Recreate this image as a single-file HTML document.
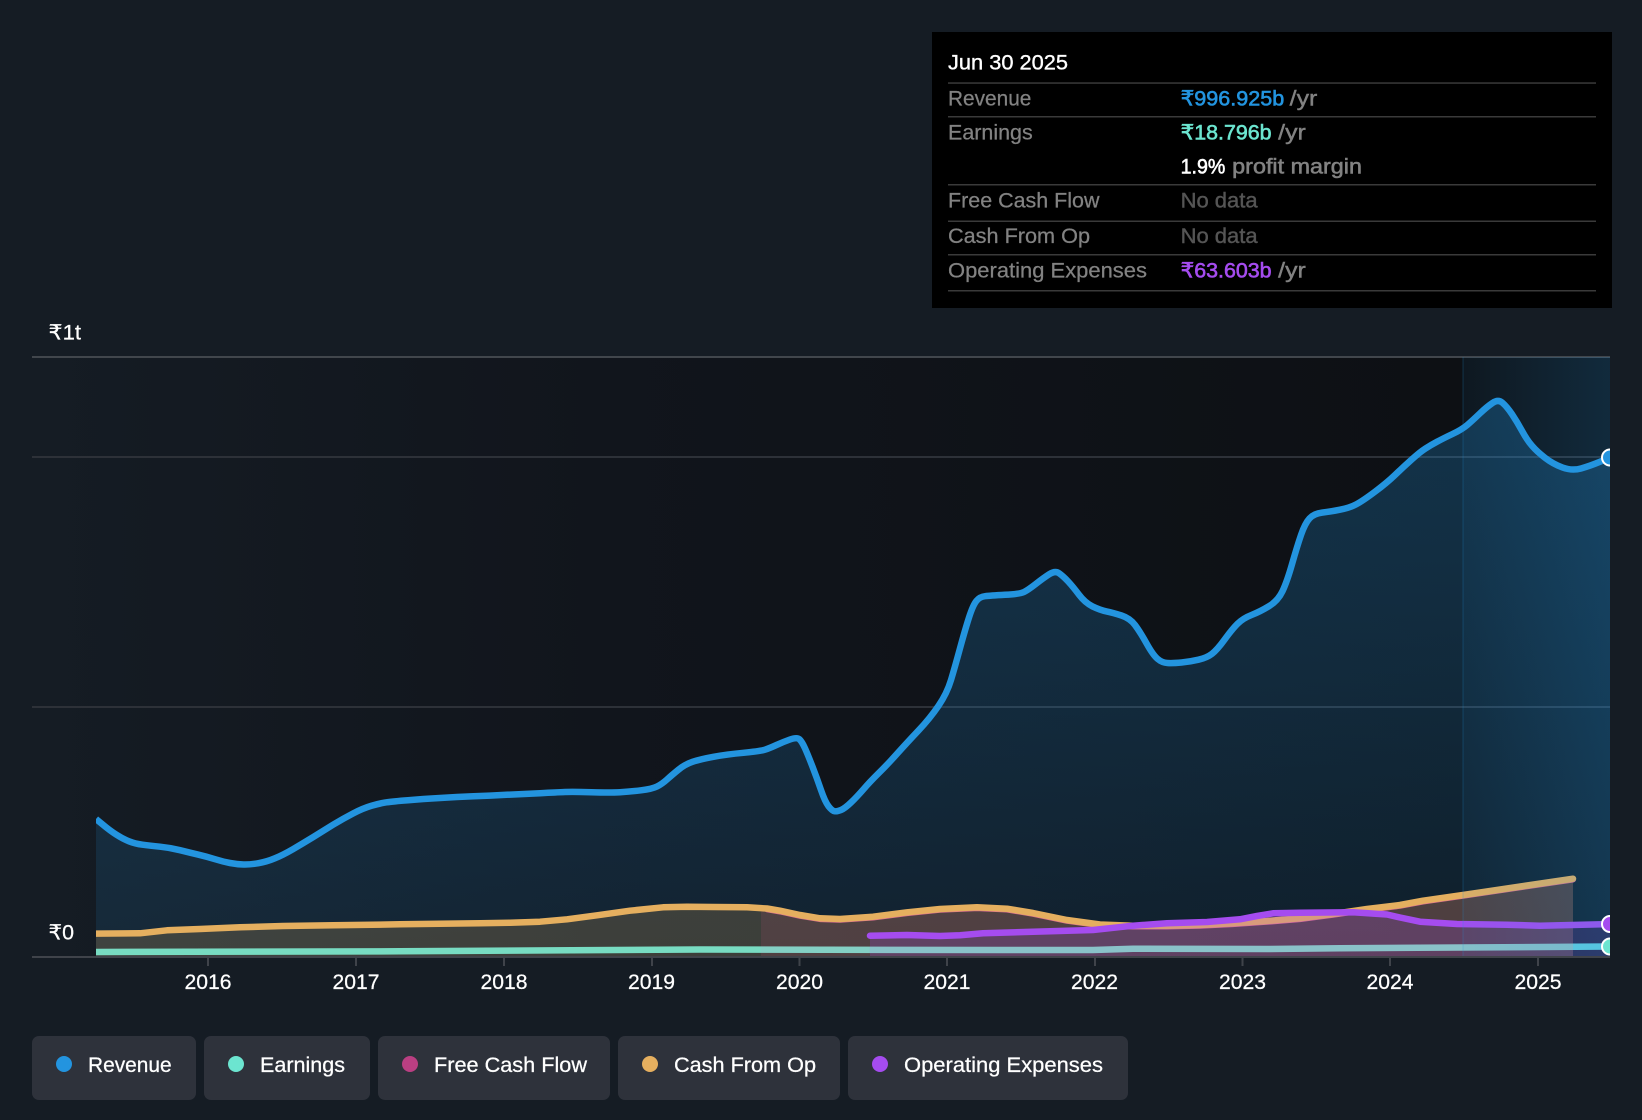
<!DOCTYPE html>
<html>
<head>
<meta charset="utf-8">
<title>Chart</title>
<style>
html,body{margin:0;padding:0;background:#151c24;width:1642px;height:1120px;overflow:hidden}
svg{display:block}
text{font-family:"Liberation Sans","DejaVu Sans",sans-serif;font-size:21px}
.g{fill:#828282;stroke:#828282;stroke-width:.25px}
.n{fill:#555555;stroke:#555555;stroke-width:.25px}
.m{stroke-width:.6px}
.w{fill:#fff;stroke:#fff;stroke-width:.25px}
</style>
</head>
<body>
<svg width="1642" height="1120" viewBox="0 0 1642 1120" xmlns="http://www.w3.org/2000/svg">
<defs>
<linearGradient id="bg" gradientUnits="userSpaceOnUse" x1="32" y1="0" x2="1610" y2="0">
<stop offset="0" stop-color="#151c24"/><stop offset=".36" stop-color="#11151c"/><stop offset=".9" stop-color="#0d1014"/><stop offset="1" stop-color="#0d1014"/>
</linearGradient>
<linearGradient id="rev" gradientUnits="userSpaceOnUse" x1="0" y1="400" x2="0" y2="957">
<stop offset="0" stop-color="#2394df" stop-opacity=".27"/><stop offset="1" stop-color="#2394df" stop-opacity=".11"/>
</linearGradient>
<linearGradient id="band" gradientUnits="userSpaceOnUse" x1="1463" y1="0" x2="1610" y2="0">
<stop offset="0" stop-color="#2394df" stop-opacity=".06"/><stop offset="1" stop-color="#2394df" stop-opacity=".2"/>
</linearGradient>
<linearGradient id="earn" gradientUnits="userSpaceOnUse" x1="96" y1="0" x2="1610" y2="0">
<stop offset="0" stop-color="#78dcc2"/><stop offset=".439" stop-color="#78dcc2"/><stop offset=".439" stop-color="#84d0c4"/><stop offset=".511" stop-color="#84d0c4"/><stop offset=".511" stop-color="#8ac2c9"/><stop offset=".9756" stop-color="#8ac2c9"/><stop offset=".9756" stop-color="#62cfe0"/><stop offset="1" stop-color="#62cfe0"/>
</linearGradient>
<clipPath id="c"><rect x="96" y="340" width="1514" height="617"/></clipPath>
<clipPath id="m"><rect x="1590" y="340" width="20" height="617"/></clipPath>
</defs>

<rect width="1642" height="1120" fill="#151c24"/>
<rect x="32" y="357" width="1578" height="600" fill="url(#bg)"/>

<!-- grid -->
<rect x="32" y="356" width="1578" height="2" fill="#41464c"/>
<rect x="32" y="456" width="1578" height="2" fill="#2d3138"/>
<rect x="32" y="706" width="1578" height="2" fill="#2d3138"/>

<g clip-path="url(#c)">
<!-- revenue fill -->
<path fill="url(#rev)" d="M96 819L103 824.8Q110 830.7 116.5 834.8Q123 839 129 841.3Q135 843.7 142.5 844.7Q150 845.7 160 846.7Q170 847.7 180 850.2Q190 852.7 198.5 854.7Q207 856.7 215 859.2Q223 861.7 230 863Q237 864.3 243.5 864.5Q250 864.7 258.5 863.2Q267 861.7 275 858.3Q283 855 293 849.2Q303 843.3 313 837.2Q323 831 333 824.8Q343 818.7 353 813.5Q363 808.3 371.5 805.8Q380 803.3 386.5 802.3Q393 801.3 408 800.2Q423 799 440 798Q457 797 473.5 796.3Q490 795.7 506.5 794.8Q523 794 540 793.2Q557 792.3 565 792Q573 791.7 591.5 792.2Q610 792.7 620 792.2Q630 791.7 641 790.3Q652 789 657 786.5Q662 784 667 779.5Q672 775 678.5 769.7Q685 764.3 692.5 761.8Q700 759.3 713.5 756.8Q727 754.3 743.5 752.8Q760 751.3 765 749.7Q770 748 776.5 745Q783 742 790 739.5Q797 737 799.5 739.3Q802 741.7 805 748.3Q808 755 812.5 766.7Q817 778.3 821 790Q825 801.7 828.5 806.2Q832 810.7 834.5 811.2Q837 811.7 841 810Q845 808.3 851 802.5Q857 796.7 863.5 789.2Q870 781.7 878.5 773.3Q887 765 897 753.8Q907 742.7 918.5 730.5Q930 718.3 938.5 705.8Q947 693.3 951 680Q955 666.7 960 648.3Q965 630 969 617.5Q973 605 976.5 600.8Q980 596.7 985 596.2Q990 595.7 1005 594.8Q1020 594 1024 592Q1028 590 1035.5 584.2Q1043 578.3 1049 574.4Q1055 570.5 1059 573.2Q1063 576 1068 581.3Q1073 586.7 1079 594.7Q1085 602.7 1092.5 606.4Q1100 610 1106.5 611.4Q1113 612.7 1121.5 615.5Q1130 618.3 1135 625Q1140 631.7 1146.5 643.3Q1153 655 1157.5 658.8Q1162 662.7 1167.5 663Q1173 663.3 1181.5 662.5Q1190 661.7 1198.5 659.7Q1207 657.7 1212 653.8Q1217 650 1224.5 639.7Q1232 629.3 1237.5 623.8Q1243 618.3 1251.5 615Q1260 611.7 1269 606.2Q1278 600.7 1282.5 591.2Q1287 581.7 1292 564.2Q1297 546.7 1301 535Q1305 523.3 1309.5 518.4Q1314 513.5 1322 512.6Q1330 511.7 1340 509.7Q1350 507.7 1356.5 504.2Q1363 500.7 1375 491.7Q1387 482.7 1395 475Q1403 467.3 1411.5 459.7Q1420 452 1425.5 448.5Q1431 445 1437 441.8Q1443 438.5 1452.5 434Q1462 429.5 1467.5 424.8Q1473 420 1480 413.3Q1487 406.7 1492.5 403Q1498 399 1502.5 402.8Q1507 406.7 1512 414.2Q1517 421.7 1522 430.8Q1527 440 1532 445.8Q1537 451.7 1545 457.8Q1553 464 1562.5 467.5Q1572 471 1581 468.5Q1590 466 1600 461.8L1610 457.5L1610 957L96 957Z"/>
<!-- revenue line -->
<path fill="none" stroke="#2394df" stroke-width="6.5" d="M96 819L103 824.8Q110 830.7 116.5 834.8Q123 839 129 841.3Q135 843.7 142.5 844.7Q150 845.7 160 846.7Q170 847.7 180 850.2Q190 852.7 198.5 854.7Q207 856.7 215 859.2Q223 861.7 230 863Q237 864.3 243.5 864.5Q250 864.7 258.5 863.2Q267 861.7 275 858.3Q283 855 293 849.2Q303 843.3 313 837.2Q323 831 333 824.8Q343 818.7 353 813.5Q363 808.3 371.5 805.8Q380 803.3 386.5 802.3Q393 801.3 408 800.2Q423 799 440 798Q457 797 473.5 796.3Q490 795.7 506.5 794.8Q523 794 540 793.2Q557 792.3 565 792Q573 791.7 591.5 792.2Q610 792.7 620 792.2Q630 791.7 641 790.3Q652 789 657 786.5Q662 784 667 779.5Q672 775 678.5 769.7Q685 764.3 692.5 761.8Q700 759.3 713.5 756.8Q727 754.3 743.5 752.8Q760 751.3 765 749.7Q770 748 776.5 745Q783 742 790 739.5Q797 737 799.5 739.3Q802 741.7 805 748.3Q808 755 812.5 766.7Q817 778.3 821 790Q825 801.7 828.5 806.2Q832 810.7 834.5 811.2Q837 811.7 841 810Q845 808.3 851 802.5Q857 796.7 863.5 789.2Q870 781.7 878.5 773.3Q887 765 897 753.8Q907 742.7 918.5 730.5Q930 718.3 938.5 705.8Q947 693.3 951 680Q955 666.7 960 648.3Q965 630 969 617.5Q973 605 976.5 600.8Q980 596.7 985 596.2Q990 595.7 1005 594.8Q1020 594 1024 592Q1028 590 1035.5 584.2Q1043 578.3 1049 574.4Q1055 570.5 1059 573.2Q1063 576 1068 581.3Q1073 586.7 1079 594.7Q1085 602.7 1092.5 606.4Q1100 610 1106.5 611.4Q1113 612.7 1121.5 615.5Q1130 618.3 1135 625Q1140 631.7 1146.5 643.3Q1153 655 1157.5 658.8Q1162 662.7 1167.5 663Q1173 663.3 1181.5 662.5Q1190 661.7 1198.5 659.7Q1207 657.7 1212 653.8Q1217 650 1224.5 639.7Q1232 629.3 1237.5 623.8Q1243 618.3 1251.5 615Q1260 611.7 1269 606.2Q1278 600.7 1282.5 591.2Q1287 581.7 1292 564.2Q1297 546.7 1301 535Q1305 523.3 1309.5 518.4Q1314 513.5 1322 512.6Q1330 511.7 1340 509.7Q1350 507.7 1356.5 504.2Q1363 500.7 1375 491.7Q1387 482.7 1395 475Q1403 467.3 1411.5 459.7Q1420 452 1425.5 448.5Q1431 445 1437 441.8Q1443 438.5 1452.5 434Q1462 429.5 1467.5 424.8Q1473 420 1480 413.3Q1487 406.7 1492.5 403Q1498 399 1502.5 402.8Q1507 406.7 1512 414.2Q1517 421.7 1522 430.8Q1527 440 1532 445.8Q1537 451.7 1545 457.8Q1553 464 1562.5 467.5Q1572 471 1581 468.5Q1590 466 1600 461.8L1610 457.5"/>

<!-- free cash flow fill + line -->
<polygon fill="#ba3f82" fill-opacity=".15" points="761,908 767,908.5 780,910.7 800,915 820,918.3 840,919 873,916.7 907,912.3 940,909 977,907.3 1007,908.7 1033,913 1067,920 1100,924.5 1133,925.7 1167,925.7 1200,925 1233,923.3 1267,921 1300,918.3 1333,914 1367,909 1400,905 1423,900.7 1463,895 1573,878.7 1573,957 761,957"/>
<polyline fill="none" stroke="#e0609f" stroke-width="6" stroke-linejoin="round" stroke-linecap="round" transform="translate(0,.8)" points="767,908.5 780,910.7 800,915 820,918.3 840,919 873,916.7 907,912.3 940,909 977,907.3 1007,908.7 1033,913 1067,920 1100,924.5 1133,925.7 1167,925.7 1200,925 1233,923.3 1267,921 1300,918.3 1333,914 1367,909 1400,905 1423,900.7 1463,895 1573,878.7"/>

<!-- cash from op fill + line -->
<polygon fill="#e5af5f" fill-opacity=".2" points="96,933.7 140,933.3 167,930.3 200,929 240,927.3 283,926 333,925.3 400,924.3 480,923.3 510,922.7 540,921.7 567,919.3 597,915.3 630,910.7 663,907.3 687,906.7 713,907 747,907.3 767,908.5 780,910.7 800,915 820,918.3 840,919 873,916.7 907,912.3 940,909 977,907.3 1007,908.7 1033,913 1067,920 1100,924.5 1133,925.7 1167,925.7 1200,925 1233,923.3 1267,921 1300,918.3 1333,914 1367,909 1400,905 1423,900.7 1463,895 1573,878.7 1573,957 96,957"/>
<polyline fill="none" stroke="#e5af5f" stroke-width="6.5" stroke-linejoin="round" stroke-linecap="round" points="90,933.7 140,933.3 167,930.3 200,929 240,927.3 283,926 333,925.3 400,924.3 480,923.3 510,922.7 540,921.7 567,919.3 597,915.3 630,910.7 663,907.3 687,906.7 713,907 747,907.3 767,908.5 780,910.7 800,915 820,918.3 840,919 873,916.7 907,912.3 940,909 977,907.3 1007,908.7 1033,913 1067,920 1100,924.5 1133,925.7 1167,925.7 1200,925 1233,923.3 1267,921 1300,918.3 1333,914 1367,909 1400,905 1423,900.7 1463,895 1573,878.7"/>

<!-- operating expenses fill + line -->
<polygon fill="#a54cef" fill-opacity=".2" points="870,935.7 907,935 940,936 960,935.3 983,933.3 1033,931.7 1093,930 1133,925.7 1167,923.3 1207,922 1240,919.3 1257,916 1273,913.3 1300,912.7 1353,912.3 1387,914.5 1400,917.5 1420,921.7 1457,924 1507,924.7 1540,925.7 1603,924.3 1610,924 1610,957 870,957"/>
<polyline fill="none" stroke="#a54cef" stroke-width="6.5" stroke-linejoin="round" stroke-linecap="round" points="870,935.7 907,935 940,936 960,935.3 983,933.3 1033,931.7 1093,930 1133,925.7 1167,923.3 1207,922 1240,919.3 1257,916 1273,913.3 1300,912.7 1353,912.3 1387,914.5 1400,917.5 1420,921.7 1457,924 1507,924.7 1540,925.7 1603,924.3 1620,924"/>

<!-- earnings line -->
<polyline fill="none" stroke="url(#earn)" stroke-width="6.5" stroke-linejoin="round" points="96,952 400,951.3 700,949.5 1000,950 1093,950 1133,948.7 1267,949 1340,948.3 1610,946.5"/>
</g>

<!-- highlighted band -->
<rect x="1463" y="357" width="147" height="600" fill="url(#band)"/>
<rect x="1462" y="357" width="2" height="600" fill="#2394df" fill-opacity=".12"/>

<!-- baseline and ticks -->
<rect x="32" y="956" width="1578" height="2" fill="#3f434a"/>
<g fill="#3f434a">
<rect x="207" y="958" width="2" height="8"/><rect x="355" y="958" width="2" height="8"/><rect x="503" y="958" width="2" height="8"/><rect x="651" y="958" width="2" height="8"/><rect x="798.5" y="958" width="2" height="8"/><rect x="946" y="958" width="2" height="8"/><rect x="1094" y="958" width="2" height="8"/><rect x="1241.5" y="958" width="2" height="8"/><rect x="1389" y="958" width="2" height="8"/><rect x="1537" y="958" width="2" height="8"/>
</g>

<!-- markers -->
<g clip-path="url(#m)" stroke="#fff" stroke-width="2">
<circle cx="1610" cy="457.5" r="8" fill="#2394df"/>
<circle cx="1610" cy="924" r="8" fill="#a54cef"/>
<circle cx="1610" cy="946.5" r="8" fill="#6ce5d0"/>
</g>

<!-- axis labels -->
<g>
<text class="w" x="48.5" y="339.3" textLength="32.5" lengthAdjust="spacingAndGlyphs">₹1t</text>
<text class="w" x="48.5" y="939.7" textLength="25.5" lengthAdjust="spacingAndGlyphs">₹0</text>
<text class="w" x="184.5" y="989" textLength="47" lengthAdjust="spacingAndGlyphs">2016</text>
<text class="w" x="332.5" y="989" textLength="47" lengthAdjust="spacingAndGlyphs">2017</text>
<text class="w" x="480.5" y="989" textLength="47" lengthAdjust="spacingAndGlyphs">2018</text>
<text class="w" x="628" y="989" textLength="47" lengthAdjust="spacingAndGlyphs">2019</text>
<text class="w" x="776" y="989" textLength="47" lengthAdjust="spacingAndGlyphs">2020</text>
<text class="w" x="923.5" y="989" textLength="47" lengthAdjust="spacingAndGlyphs">2021</text>
<text class="w" x="1071" y="989" textLength="47" lengthAdjust="spacingAndGlyphs">2022</text>
<text class="w" x="1219" y="989" textLength="47" lengthAdjust="spacingAndGlyphs">2023</text>
<text class="w" x="1366.5" y="989" textLength="47" lengthAdjust="spacingAndGlyphs">2024</text>
<text class="w" x="1514.5" y="989" textLength="47" lengthAdjust="spacingAndGlyphs">2025</text>
</g>

<!-- tooltip -->
<rect x="932" y="32" width="680" height="276" fill="#000"/>
<g fill="#3a3a3a">
<rect x="948" y="82.3" width="648" height="1.5"/>
<rect x="948" y="116" width="648" height="1.5"/>
<rect x="948" y="184" width="648" height="1.5"/>
<rect x="948" y="220.5" width="648" height="1.5"/>
<rect x="948" y="254" width="648" height="1.5"/>
<rect x="948" y="290" width="648" height="1.5"/>
</g>
<text x="948" y="69.3" fill="#fff" stroke="#fff" stroke-width=".35" textLength="120" lengthAdjust="spacingAndGlyphs">Jun 30 2025</text>
<text class="g" x="948" y="105.5" textLength="83.4" lengthAdjust="spacingAndGlyphs">Revenue</text>
<text class="g" x="948" y="139.5" textLength="84.7" lengthAdjust="spacingAndGlyphs">Earnings</text>
<text class="g" x="948" y="207.7" textLength="151.5" lengthAdjust="spacingAndGlyphs">Free Cash Flow</text>
<text class="g" x="948" y="243" textLength="142" lengthAdjust="spacingAndGlyphs">Cash From Op</text>
<text class="g" x="948" y="277.5" textLength="199" lengthAdjust="spacingAndGlyphs">Operating Expenses</text>

<text class="m" x="1180.6" y="105.5" fill="#2394df" stroke="#2394df" textLength="103.6" lengthAdjust="spacingAndGlyphs">₹996.925b</text>
<text class="g" x="1289.7" y="105.5" style="stroke-width:.4px" textLength="27.6" lengthAdjust="spacingAndGlyphs">/yr</text>
<text class="m" x="1180.6" y="139.5" fill="#6ce5d0" stroke="#6ce5d0" textLength="91" lengthAdjust="spacingAndGlyphs">₹18.796b</text>
<text class="g" x="1278.2" y="139.5" style="stroke-width:.4px" textLength="27.6" lengthAdjust="spacingAndGlyphs">/yr</text>
<text class="m" x="1180.6" y="173.7" fill="#fff" stroke="#fff" textLength="44.7" lengthAdjust="spacingAndGlyphs">1.9%</text>
<text class="g" x="1232.2" y="173.7" style="stroke-width:.55px" textLength="129.8" lengthAdjust="spacingAndGlyphs">profit margin</text>
<text class="n" x="1180.6" y="207.7" style="stroke-width:.4px" textLength="77" lengthAdjust="spacingAndGlyphs">No data</text>
<text class="n" x="1180.6" y="243" style="stroke-width:.4px" textLength="77" lengthAdjust="spacingAndGlyphs">No data</text>
<text class="m" x="1180.6" y="277.5" fill="#a54cef" stroke="#a54cef" textLength="91" lengthAdjust="spacingAndGlyphs">₹63.603b</text>
<text class="g" x="1278.2" y="277.5" style="stroke-width:.4px" textLength="27.6" lengthAdjust="spacingAndGlyphs">/yr</text>

<!-- legend -->
<g fill="#2e323b">
<rect x="32" y="1036" width="164" height="64" rx="7"/>
<rect x="204" y="1036" width="166" height="64" rx="7"/>
<rect x="378" y="1036" width="232" height="64" rx="7"/>
<rect x="618" y="1036" width="222" height="64" rx="7"/>
<rect x="848" y="1036" width="280" height="64" rx="7"/>
</g>
<circle cx="64" cy="1064" r="8" fill="#2394df"/>
<circle cx="236" cy="1064" r="8" fill="#6ce5d0"/>
<circle cx="410" cy="1064" r="8" fill="#ba3f82"/>
<circle cx="650" cy="1064" r="8" fill="#e5af5f"/>
<circle cx="880" cy="1064" r="8" fill="#a54cef"/>
<g>
<text class="w" x="88" y="1072" textLength="83.6" lengthAdjust="spacingAndGlyphs">Revenue</text>
<text class="w" x="260" y="1072" textLength="85" lengthAdjust="spacingAndGlyphs">Earnings</text>
<text class="w" x="434" y="1072" textLength="153" lengthAdjust="spacingAndGlyphs">Free Cash Flow</text>
<text class="w" x="674" y="1072" textLength="142" lengthAdjust="spacingAndGlyphs">Cash From Op</text>
<text class="w" x="904" y="1072" textLength="199" lengthAdjust="spacingAndGlyphs">Operating Expenses</text>
</g>
</svg>
</body>
</html>
